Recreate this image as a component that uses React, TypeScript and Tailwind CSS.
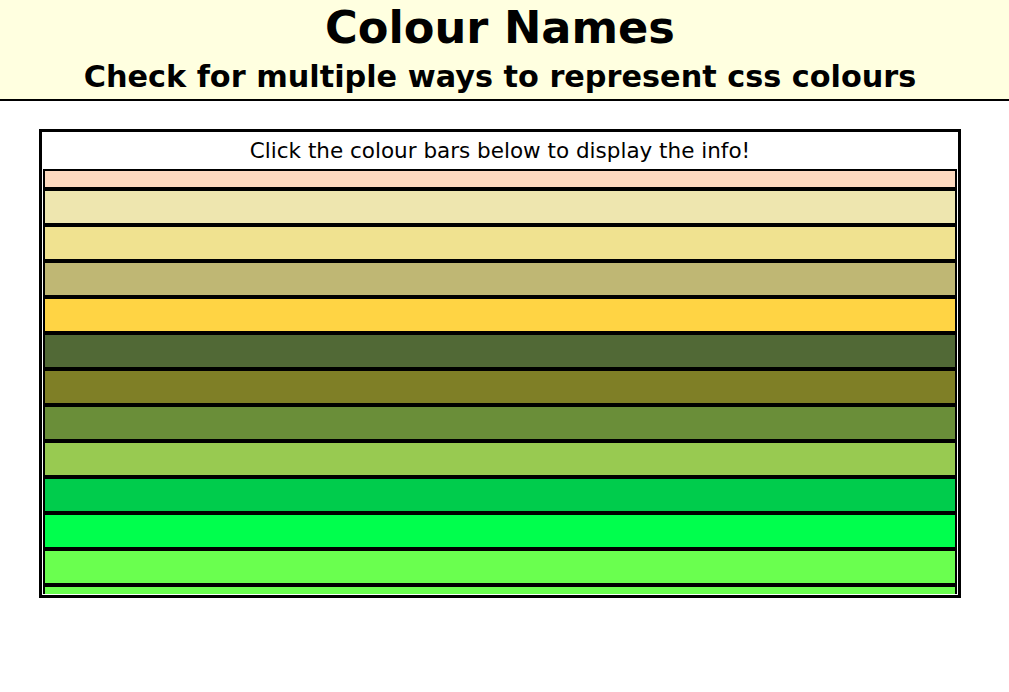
import { useEffect, useRef } from "react";

const colours = [
  "#fdd9bf",
  "#eee6af",
  "#f0e290",
  "#bfb774",
  "#ffd444",
  "#516936",
  "#7f7f26",
  "#6a8e39",
  "#98ca51",
  "#00cc4c",
  "#00ff4d",
  "#6aff4f",
  "#6aff4f",
  "#7cfc00",
  "#32cd32",
  "#228b22",
  "#008000",
  "#006400",
];

export default function App() {
  const listRef = useRef<HTMLDivElement>(null);

  useEffect(() => {
    if (listRef.current) listRef.current.scrollTop = 18;
  }, []);

  return (
    <div className="min-h-screen bg-white font-['DejaVu_Sans',Verdana,sans-serif] text-black">
      <header className="border-b-2 border-black bg-[#ffffe0] pb-[2px] pr-[9px] text-center font-bold">
        <h1 className="text-[44.7px] leading-[56px]">Colour Names</h1>
        <h2 className="text-[30.3px] leading-[41px]">Check for multiple ways to represent css colours</h2>
      </header>

      <main className="ml-[39px] mt-[28px] w-[922px] border-[3px] border-black p-px">
        <p className="text-center text-[21.5px] leading-[36px]">Click the colour bars below to display the info!</p>
        <div
          ref={listRef}
          className="h-[425px] overflow-y-auto border-t-2 border-black [scrollbar-width:none]"
        >
          {colours.map((c, i) => (
            <div
              key={i}
              className="h-[36px] cursor-pointer border-2 border-black"
              style={{ backgroundColor: c }}
            />
          ))}
        </div>
      </main>
    </div>
  );
}
